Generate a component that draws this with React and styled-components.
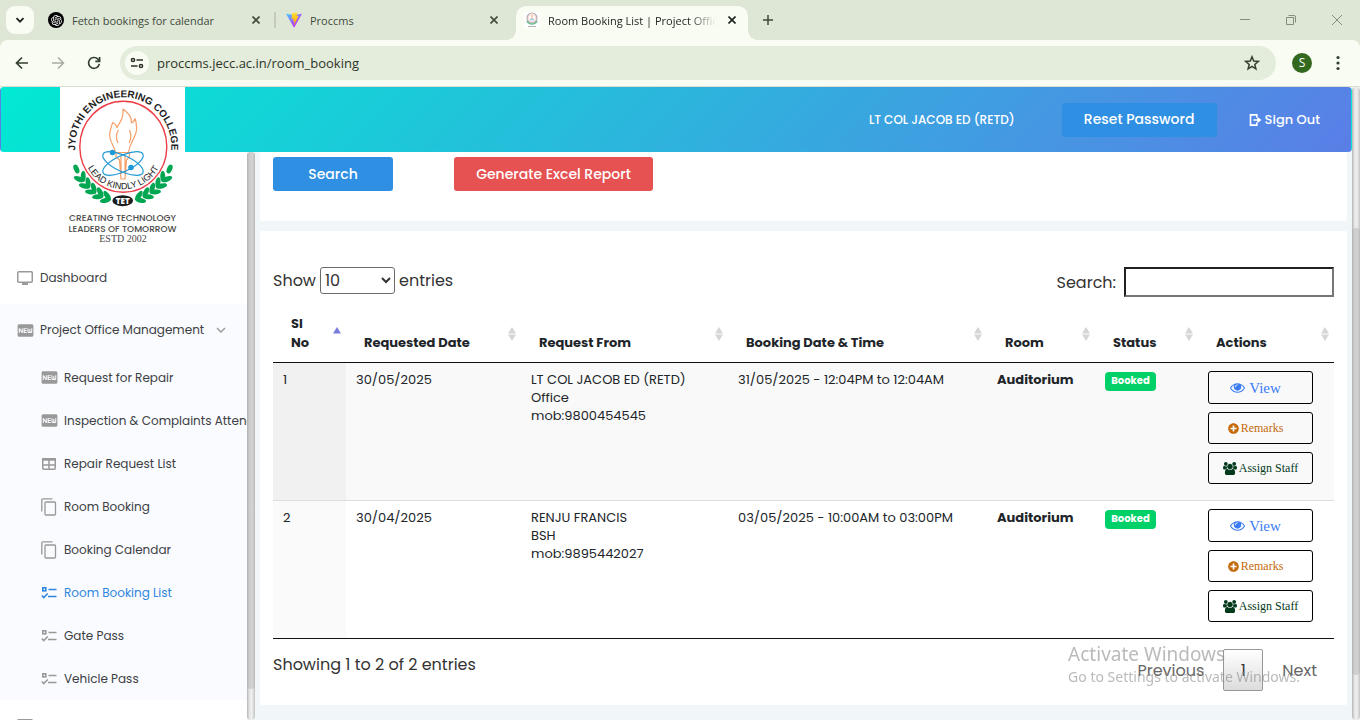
import React from 'react';
import styled, { createGlobalStyle, css } from 'styled-components';
import { MdFiberNew } from 'react-icons/md';
import { FaPlusCircle } from 'react-icons/fa';
import { RiOpenaiFill } from 'react-icons/ri';

const GlobalStyle = createGlobalStyle`
  *, *::before, *::after { box-sizing: border-box; }
  body {
    margin: 0;
    background: #f1f6f9;
    color: #212529;
    font-family: Poppins, Inter, sans-serif;
    font-size: 13px;
  }
  button, input, select { font: inherit; color: inherit; }
  button { cursor: pointer; }
  a { color: inherit; text-decoration: none; }
`;

const uiFont = "'Segoe UI', 'Open Sans', sans-serif";

const Shell = styled.div`
  display: flex;
  flex-direction: column;
  height: 100vh;
  overflow: hidden;
`;

/* ---------- Browser window ---------- */

const Plain = styled.button`
  display: grid;
  place-items: center;
  flex: none;
  padding: 0;
  border: 0;
  background: none;
`;

const TabStrip = styled.div`
  display: flex;
  flex: none;
  height: 40px;
  padding: 6px 0 0 6px;
  background: #dee7d6;
  color: #3f4a3b;
  font-family: ${uiFont};
  font-size: 11px;
`;

const TabSearch = styled(Plain)`
  width: 28px;
  height: 28px;
  margin-right: 6px;
  border-radius: 9px;
  background: #f9fcf3;
  color: #1c231a;
`;

const Tab = styled.div`
  position: relative;
  display: flex;
  align-items: center;
  gap: 8px;
  width: 236px;
  height: 28px;
  margin-right: 2px;
  padding: 0 16px 0 8px;

  ${(p) => p.$divider && css`
    &::after {
      content: '';
      position: absolute;
      right: 0;
      top: 6px;
      width: 2px;
      height: 16px;
      background: #c4cbbd;
    }
  `}

  ${(p) => p.$active && css`
    width: 232px;
    height: 34px;
    margin-right: 10px;
    padding: 0 12px 6px 8px;
    border-radius: 10px 10px 0 0;
    background: #f9fcf3;
    color: #1c231a;
    &::before, &::after {
      content: '';
      position: absolute;
      bottom: 0;
      width: 10px;
      height: 10px;
    }
    &::before {
      left: -10px;
      background: radial-gradient(circle at 0 0, transparent 10px, #f9fcf3 10px);
    }
    &::after {
      right: -10px;
      background: radial-gradient(circle at 100% 0, transparent 10px, #f9fcf3 10px);
    }
  `}
`;

const TabTitle = styled.span`
  flex: 1;
  min-width: 0;
  overflow: hidden;
  white-space: nowrap;
  ${(p) => p.$fade && css`
    mask-image: linear-gradient(to right, #000 82%, transparent 98%);
  `}
`;

const TabIcon = styled.span`
  display: grid;
  place-items: center;
  flex: none;
  width: 16px;
  height: 16px;
  border-radius: ${(p) => (p.$round ? '50%' : '0')};
  background: ${(p) => p.$bg || 'transparent'};
  color: #fff;
`;

const NewTab = styled(Plain)`
  width: 20px;
  height: 28px;
`;

const WindowControls = styled.div`
  display: flex;
  height: 28px;
  margin-left: auto;
  color: #858c80;
`;

const WindowButton = styled(Plain)`
  width: 46px;
`;

const ToolbarBack = styled.div`
  flex: none;
  background: #dee7d6;
`;

const Toolbar = styled.div`
  display: flex;
  align-items: center;
  height: 47px;
  padding: 0 4px 1px;
  border-bottom: 1px solid #d9e0d0;
  border-radius: 8px 8px 0 0;
  background: #f9fcf3;
  color: #33402f;
  font-family: ${uiFont};
`;

const ToolButton = styled(Plain)`
  width: 36px;
  height: 34px;
  color: ${(p) => (p.$dim ? '#a5aca0' : 'inherit')};
`;

const Address = styled.div`
  display: flex;
  align-items: center;
  flex: 1;
  gap: 8px;
  height: 34px;
  margin: 0 8px;
  padding: 0 6px 0 5px;
  border-radius: 17px;
  background: #e4ecdc;
`;

const SiteInfo = styled(Plain)`
  width: 24px;
  height: 24px;
  border-radius: 50%;
  background: #f9fcf3;
`;

const AddressInput = styled.input`
  flex: 1;
  min-width: 0;
  padding: 0;
  border: 0;
  outline: 0;
  background: none;
  color: #2d352a;
`;

const Avatar = styled.button`
  width: 20px;
  height: 20px;
  margin: 0 8px;
  padding: 0;
  border: 0;
  border-radius: 50%;
  background: #33691e;
  color: #fff;
  font-size: 12px;
  line-height: 20px;
`;

/* ---------- Page frame ---------- */

const Viewport = styled.div`
  display: flex;
  flex: 1;
  min-height: 0;
`;

const Page = styled.div`
  display: flex;
  flex-direction: column;
  flex: 1;
  min-width: 0;
`;

const ScrollTrack = styled.div`
  flex: none;
  width: 8px;
  padding-top: ${(p) => p.$before || 0}px;
  padding-bottom: ${(p) => p.$after}px;
  border-radius: 5px;
  background: linear-gradient(to right, #b4b4b4, #e4e4e4 30%, #f0f0f0 60%, #c4c4c4);
`;

const ScrollThumb = styled.div`
  height: 100%;
  border-radius: 4px;
  background: linear-gradient(to right, #b2b2b2, #cdcdcd 30%, #d2d2d2 70%, #b8b8b8);
`;

const Header = styled.header`
  position: relative;
  z-index: 2;
  display: flex;
  align-items: center;
  justify-content: flex-end;
  flex: none;
  height: 65px;
  padding: 0 31px;
  border: 1px solid transparent;
  border-radius: 4px;
  background-image: linear-gradient(135deg, #01e9d3, #5a7ee7);
  color: #fff;
  font-weight: 500;
`;

const LogoBox = styled.a`
  position: absolute;
  left: 59px;
  top: -1px;
  width: 125px;
  height: 158px;
  background: #fff;
`;

const UserName = styled.span`
  margin-right: 47px;
  font-size: 12px;
`;

const FilledButton = styled.button`
  min-width: ${(p) => p.$width}px;
  height: 34px;
  padding: 0 20px;
  border: 0;
  border-radius: 3px;
  background: ${(p) => (p.$danger ? '#e65252' : '#2f8fe2')};
  color: #fff;
  font-size: 14px;
  font-weight: 500;
`;

const SignOut = styled.a`
  display: flex;
  align-items: center;
  gap: 3px;
  margin-left: 32px;
`;

const Body = styled.div`
  display: flex;
  flex: 1;
  min-height: 0;
`;

/* ---------- Sidebar ---------- */

const Sidebar = styled.nav`
  width: 247px;
  flex: none;
  padding-top: 100px;
  overflow: hidden;
  background: #fff;
  color: #3c4043;
  font-size: 12px;
`;

const NavGroup = styled.div`
  background: #fafbfe;
`;

const NavItem = styled.a`
  display: flex;
  align-items: center;
  height: ${(p) => (p.$sub ? 43 : 52)}px;
  padding-left: ${(p) => (p.$sub ? 40 : 16)}px;
  white-space: nowrap;
  color: ${(p) => (p.$current ? '#2f86e0' : 'inherit')};

  svg { flex: none; color: ${(p) => (p.$current ? '#2f86e0' : '#999')}; }
`;

const NavIcon = styled.span`
  display: grid;
  place-items: center;
  flex: none;
  width: 18px;
  height: 20px;
  margin-right: 6px;
`;

const NavLabel = styled.span`
  margin-right: 12px;
`;

/* ---------- Content ---------- */

const Main = styled.main`
  flex: 1;
  min-width: 0;
  padding: 0 5px;
  background: #f1f6f9;
`;

const Card = styled.section`
  margin-bottom: 10px;
  padding: ${(p) => p.$pad};
  border-radius: 2px;
  background: #fff;
`;

const FilterActions = styled.div`
  display: flex;
  gap: 61px;
`;

const Controls = styled.div`
  display: flex;
  justify-content: space-between;
  align-items: flex-start;
  margin-bottom: 7px;
  color: #333;
  font-size: 16px;

  label { display: flex; align-items: center; }
`;

const LengthSelect = styled.select`
  width: 75px;
  height: 27px;
  margin: 0 4px;
  padding: 0;
  border: 1px solid #6b6b6b;
  border-radius: 3px;
  background: #fff;
`;

const SearchInput = styled.input`
  width: 210px;
  height: 30px;
  margin-left: 8px;
  border: 2px inset #767676;
  background: #fff;
`;

const Table = styled.table`
  width: 100%;
  table-layout: fixed;
  border-collapse: separate;
  border-spacing: 0;
  border-bottom: 1px solid #111;
`;

const Th = styled.th`
  padding: 0;
  border-bottom: 1px solid #111;
`;

const SortButton = styled.button`
  display: flex;
  justify-content: space-between;
  align-items: center;
  width: 100%;
  height: 58px;
  padding: 0 5px 10px 18px;
  border: 0;
  background: none;
  font-size: 13px;
  font-weight: 700;
  line-height: 19px;
  text-align: left;
  white-space: nowrap;

  span { align-self: flex-end; }
  svg { flex: none; margin-top: 12px; }
`;

const Row = styled.tr`
  height: ${(p) => (p.$ruled ? 138 : 137)}px;
  background: ${(p) => (p.$odd ? '#f9f9f9' : '#fff')};
  td { border-top: ${(p) => (p.$ruled ? '1px solid #ddd' : '0')}; }
  td:first-child { background: ${(p) => (p.$odd ? '#f1f1f1' : '#fafafa')}; }
`;

const Td = styled.td`
  padding: 8px 10px;
  vertical-align: top;
  line-height: 18px;
  white-space: nowrap;
  font-weight: ${(p) => (p.$strong ? 700 : 400)};
`;

const Badge = styled.span`
  display: block;
  width: 51px;
  height: 19px;
  margin-top: 1px;
  border-radius: 4px;
  background: #00d068;
  color: #fff;
  font-size: 10px;
  font-weight: 700;
  line-height: 18px;
  text-align: center;
`;

const ActionStack = styled.div`
  display: flex;
  flex-direction: column;
  gap: 8px;
`;

const ActionButton = styled.button`
  display: flex;
  align-items: center;
  justify-content: center;
  gap: ${(p) => (p.$large ? 4 : 2)}px;
  width: 105px;
  height: ${(p) => (p.$large ? 33 : 32)}px;
  padding: ${(p) => (p.$shift ? '0 10px 0 0' : '0')};
  border: 1px solid #000;
  border-radius: 3px;
  background: transparent;
  color: ${(p) => p.$color};
  font-family: 'Liberation Serif', serif;
  font-size: ${(p) => (p.$large ? 15 : 12)}px;
`;

const Footer = styled.div`
  display: flex;
  justify-content: space-between;
  align-items: flex-start;
  padding-top: 10px;
  color: #333;
  font-size: 16px;
`;

const Info = styled.div`
  line-height: 32px;
`;

const Pager = styled.div`
  display: flex;
`;

const PageButton = styled.button`
  height: 42px;
  padding: 0 ${(p) => (p.$current ? 0 : 16)}px;
  width: ${(p) => (p.$current ? '40px' : 'auto')};
  margin: 0 ${(p) => (p.$current ? 2 : 0)}px;
  border: 1px solid ${(p) => (p.$current ? '#979797' : 'transparent')};
  border-radius: 2px;
  background: ${(p) => (p.$current ? 'linear-gradient(#fff, #dcdcdc)' : 'none')};
  color: ${(p) => (p.$current ? '#333' : '#666')};
`;

const Watermark = styled.div`
  position: fixed;
  right: 60px;
  bottom: 33px;
  z-index: 5;
  pointer-events: none;
  color: rgba(140, 140, 140, 0.6);
  font-family: 'Noto Sans', sans-serif;
  font-size: 14px;
  line-height: 20px;

  strong { display: block; font-size: 19px; font-weight: 400; line-height: 26px; }
`;

/* ---------- Icons ---------- */

const Stroke = ({ size = 16, w = 1.5, d, box = 16, ...rest }) => (
  <svg width={size} height={size} viewBox={`0 0 ${box} ${box}`} fill="none" stroke="currentColor" strokeWidth={w} aria-hidden="true" {...rest}>
    <path d={d} />
  </svg>
);

const CloseIcon = () => <Stroke size={8} box={8} w={1.6} d="M.5.5l7 7M7.5.5l-7 7" />;

const ViteIcon = () => (
  <svg width="16" height="16" viewBox="0 0 410 404" aria-hidden="true">
    <defs>
      <linearGradient id="viteBody" x1="6" y1="33" x2="235" y2="344" gradientUnits="userSpaceOnUse">
        <stop stopColor="#41D1FF" />
        <stop offset="1" stopColor="#BD34FE" />
      </linearGradient>
      <linearGradient id="viteBolt" x1="194" y1="9" x2="236" y2="293" gradientUnits="userSpaceOnUse">
        <stop stopColor="#FFEA83" />
        <stop offset=".08" stopColor="#FFDD35" />
        <stop offset="1" stopColor="#FFA800" />
      </linearGradient>
    </defs>
    <path fill="url(#viteBody)" d="M399.641 59.5246L215.643 388.545C211.844 395.338 202.084 395.378 198.228 388.618L10.5817 59.5563C6.38087 52.1896 12.6802 43.2665 21.0281 44.7586L205.223 77.6824C206.398 77.8924 207.601 77.8904 208.776 77.6763L389.119 44.8058C397.439 43.2894 403.768 52.1434 399.641 59.5246Z" />
    <path fill="url(#viteBolt)" d="M292.965 1.5744L156.801 28.2552C154.563 28.6937 152.906 30.5903 152.771 32.8664L144.395 174.33C144.198 177.662 147.258 180.248 150.51 179.498L188.42 170.749C191.967 169.931 195.172 173.055 194.443 176.622L183.18 231.775C182.422 235.487 185.907 238.661 189.532 237.56L212.947 230.446C216.577 229.344 220.065 232.527 219.297 236.242L201.398 322.875C200.278 328.294 207.486 331.249 210.492 326.603L212.5 323.5L323.454 102.072C325.312 98.3645 322.108 94.137 318.036 94.9228L279.014 102.454C275.347 103.161 272.227 99.746 273.262 96.1583L298.731 7.86689C299.767 4.27314 296.636 0.855181 292.965 1.5744Z" />
  </svg>
);

const CollegeMark = () => (
  <svg width="16" height="16" viewBox="0 0 16 16" fill="none" aria-hidden="true">
    <circle cx="8" cy="6" r="5" stroke="#b9a9a9" strokeWidth="1.2" />
    <circle cx="8" cy="6" r="3.6" stroke="#eebcbc" strokeWidth=".6" />
    <path d="M8 3v5" stroke="#f3c7a5" strokeWidth="1.6" />
    <path d="M6 7.5h4" stroke="#9fcbea" strokeWidth="1.6" />
    <path d="M3 9c1 2.600 3 3 5 3s4-.4 5-3" stroke="#6fbf94" strokeWidth="1.500" />
    <path d="M4 14.500h8" stroke="#b5b5b5" />
  </svg>
);

const ReloadIcon = () => (
  <svg width="16" height="16" viewBox="0 0 16 16" fill="none" stroke="currentColor" strokeWidth="1.700" aria-hidden="true">
    <path d="M13.300 8.800A5.400 5.400 0 1 1 11.900 4.200L13.500 6" />
    <path d="M13.600 2v4.300H9.300" />
  </svg>
);

const TuneIcon = () => (
  <svg width="14" height="14" viewBox="0 0 14 14" fill="none" stroke="#2b3328" strokeWidth="1.500" aria-hidden="true">
    <circle cx="3" cy="4" r="1.600" />
    <path d="M6.500 4H13M1 10h6.500" />
    <circle cx="11" cy="10" r="1.600" />
  </svg>
);

const MonitorIcon = () => (
  <svg width="16" height="14" viewBox="0 0 16 14" aria-hidden="true">
    <rect x=".75" y=".75" width="14.500" height="10.500" rx="1" fill="none" stroke="currentColor" strokeWidth="1.500" />
    <path d="M5 11h6v3H5z" fill="currentColor" />
  </svg>
);

const GridIcon = () => (
  <svg width="14" height="12" viewBox="0 0 14 12" fill="none" stroke="currentColor" strokeWidth="1.500" aria-hidden="true">
    <rect x=".75" y=".75" width="12.500" height="10.500" rx="1" />
    <path d="M0 1.400h14" strokeWidth="2.600" />
    <path d="M0 7h14M7 2v10" />
  </svg>
);

const CopyIcon = () => (
  <svg width="16" height="18" viewBox="0 0 16 18" fill="none" stroke="currentColor" strokeWidth="1.300" aria-hidden="true">
    <path d="M.8 13.500V1.800q0-1 1-1H11.500" />
    <rect x="4" y="4" width="10.500" height="13" rx="1" />
  </svg>
);

const ChecklistIcon = () => (
  <svg width="16" height="14" viewBox="0 0 16 14" fill="none" stroke="currentColor" strokeWidth="1.600" aria-hidden="true">
    <rect x="1.800" y="1.800" width="3" height="3" />
    <path d="M7.500 3.500h8M7 10.500h8.500M.8 9.500l1.900 2L6.800 7.500" />
  </svg>
);

const SignOutIcon = () => (
  <svg width="13" height="12" viewBox="0 0 13 12" fill="none" stroke="currentColor" strokeWidth="1.600" aria-hidden="true">
    <path d="M7.800 3.500V.9H1.500v10.200h6.300V8.500M4.500 6h6" />
    <path d="M8.300 2.700L12.500 6 8.300 9.300z" fill="currentColor" stroke="none" />
  </svg>
);

const EyeIcon = () => (
  <svg width="15" height="15" viewBox="0 0 1792 1792" fill="currentColor" aria-hidden="true">
    <path d="M1664 960q-152-236-381-353 61 104 61 225 0 185-131.500 316.500t-316.500 131.500-316.500-131.500-131.500-316.500q0-121 61-225-229 117-381 353 133 205 333.500 326.500t434.500 121.500 434.500-121.500 333.500-326.500zm-720-384q0-20-14-34t-34-14q-125 0-214.500 89.500t-89.500 214.500q0 20 14 34t34 14 34-14 14-34q0-86 61-147t147-61q20 0 34-14t14-34zm848 384q0 34-20 69-140 230-376.500 368.500t-499.500 138.500-499.500-139-376.500-368q-20-35-20-69t20-69q140-229 376.500-368t499.500-139 499.500 139 376.500 368q20 35 20 69z" />
  </svg>
);

const UsersIcon = () => (
  <svg width="14" height="13" viewBox="0 0 1920 1792" fill="currentColor" aria-hidden="true">
    <path d="M593 896q-162 5-265 128h-134q-82 0-138-40.500t-56-118.500q0-353 124-353 6 0 43.500 21t97.500 42.500 119 21.500q67 0 133-23-5 37-5 66 0 139 81 256zm1071 637q0 120-73 189.500t-194 69.500h-874q-121 0-194-69.500t-73-189.500q0-53 3.500-103.500t14-109 26.500-108.500 43-97.500 62-81 85.500-53.500 111.500-20q10 0 43 21.500t73 48 107 48 135 21.500 135-21.500 107-48 73-48 43-21.500q61 0 111.500 20t85.500 53.500 62 81 43 97.500 26.500 108.500 14 109 3.500 103.500zm-1024-1277q0 106-75 181t-181 75-181-75-75-181 75-181 181-75 181 75 75 181zm704 384q0 159-112.500 271.500t-271.500 112.500-271.500-112.500-112.500-271.500 112.500-271.500 271.500-112.500 271.500 112.500 112.500 271.500zm576 225q0 78-56 118.500t-138 40.500h-134q-103-123-265-128 81-117 81-256 0-29-5-66 66 23 133 23 59 0 119-21.500t97.500-42.500 43.500-21q124 0 124 353zm-128-609q0 106-75 181t-181 75-181-75-75-181 75-181 181-75 181 75 75 181z" />
  </svg>
);

const SortArrows = ({ active }) => (
  <svg width="8" height="14" viewBox="0 0 8 14" aria-hidden="true">
    <path d="M4 0l4 6.500H0z" fill={active ? '#7b7bdc' : '#d6d6d6'} />
    {!active && <path d="M4 14l4-6.500H0z" fill="#d6d6d6" />}
  </svg>
);

const leafAngles = [24, 33, 42, 51, 60, 69];

const Laurel = ({ side }) => (
  <g fill="#00a651">
    {leafAngles.map((deg, i) => {
      const a = ((side > 0 ? deg : 180 - deg) * Math.PI) / 180;
      const x = 63 + 51 * Math.cos(a);
      const y = 60 + 54 * Math.sin(a);
      return (
        <g key={deg} transform={`translate(${x} ${y}) rotate(${side * deg})`}>
          {i === 0 ? (
            <ellipse rx="2.600" ry="4.600" />
          ) : (
            <>
              <ellipse cx="-3" rx="2.500" ry="5.600" transform="rotate(-34)" />
              <ellipse cx="3" rx="2.500" ry="5.600" transform="rotate(34)" />
            </>
          )}
        </g>
      );
    })}
  </g>
);

const CollegeLogo = () => (
  <svg width="125" height="158" viewBox="0 0 125 158" role="img" aria-label="Jyothi Engineering College">
    <defs>
      <path id="ringTop" d="M16.500 71A48 49.500 0 1 1 110 71" />
      <path id="ringLow" d="M23.500 69A40.500 41 0 0 0 103 69" />
    </defs>
    <g fill="#1d1d1d" fontFamily="'Liberation Sans', sans-serif" textAnchor="middle">
      <text fontSize="10" fontWeight="700">
        <textPath href="#ringTop" startOffset="50%">JYOTHI ENGINEERING COLLEGE</textPath>
      </text>
      <text fontSize="9">
        <textPath href="#ringLow" startOffset="50%">LEAD KINDLY LIGHT</textPath>
      </text>
    </g>
    <ellipse cx="63.300" cy="59.700" rx="43.500" ry="45.500" fill="none" stroke="#ee3b45" strokeWidth="1.400" />
    <Laurel side={-1} />
    <Laurel side={1} />
    <g fill="none" stroke="#f5a06a" strokeWidth="1.200" strokeLinejoin="round">
      <path d="M55.500 65.500C54 58 48 53 50 45c.8-4 2-6.500 2.500-9.500 2.500 1 4 3 4.500 5 3-6 6.500-8 6-18.500 5.500 4 9 8 8.500 14 2-.8 3-2.500 3.500-4.500 2 6 2.200 12 0 17-2 5-5.500 9-6.500 17z" />
      <path d="M58 56c-2.500-5-1.500-10 .5-13M69 56c3-5 2-9 .5-13" />
      <path d="M56 65.500h13.500v4l-3 3.500-1.500 19h-4l-1.500-19-3.500-3.500zM61 69v18M65 69v18" />
    </g>
    <g fill="none" stroke="#1f9ad6" strokeWidth="1.200">
      <ellipse cx="63" cy="76.500" rx="22" ry="8" transform="rotate(25 63 76.500)" />
      <ellipse cx="63" cy="76.500" rx="22" ry="8" transform="rotate(-25 63 76.500)" />
      <circle cx="52.500" cy="65.500" r="2.200" fill="#1f9ad6" />
      <circle cx="71" cy="80.500" r="2.200" fill="#1f9ad6" />
    </g>
    <ellipse cx="62.700" cy="113.700" rx="10.300" ry="5.500" fill="#1d1d1d" />
    <g textAnchor="middle" fontFamily="Poppins, Lato, sans-serif" fontSize="9" fill="#4a4a4a">
      <text x="62.700" y="116.500" fontFamily="'Open Sans', sans-serif" fontSize="8" fontWeight="800" fill="#fff">TET</text>
      <text x="62.500" y="134">CREATING TECHNOLOGY</text>
      <text x="62.500" y="144.500">LEADERS OF TOMORROW</text>
      <text x="63" y="155" fontFamily="'Liberation Serif', serif" fontSize="10">ESTD 2002</text>
    </g>
  </svg>
);

/* ---------- Data ---------- */

const NewIcon = () => <MdFiberNew size={19} aria-hidden="true" />;

const subItems = [
  { label: 'Request for Repair', Icon: NewIcon },
  { label: 'Inspection & Complaints Attended', Icon: NewIcon },
  { label: 'Repair Request List', Icon: GridIcon },
  { label: 'Room Booking', Icon: CopyIcon },
  { label: 'Booking Calendar', Icon: CopyIcon },
  { label: 'Room Booking List', Icon: ChecklistIcon, current: true },
  { label: 'Gate Pass', Icon: ChecklistIcon },
  { label: 'Vehicle Pass', Icon: ChecklistIcon },
];

const columns = [
  { label: <>Sl<br />No</>, key: 'no', width: 73 },
  { label: 'Requested Date', key: 'date', width: 175 },
  { label: 'Request From', key: 'from', width: 207 },
  { label: 'Booking Date & Time', key: 'time' },
  { label: 'Room', key: 'room', width: 108 },
  { label: 'Status', key: 'status', width: 103 },
  { label: 'Actions', key: 'actions', width: 136 },
];

const Col = styled.col`
  width: ${(p) => (p.$width ? `${p.$width}px` : 'auto')};
`;

const bookings = [
  { no: 1, date: '30/05/2025', from: ['LT COL JACOB ED (RETD)', 'Office', 'mob:9800454545'], time: '31/05/2025 - 12:04PM to 12:04AM' },
  { no: 2, date: '30/04/2025', from: ['RENJU FRANCIS', 'BSH', 'mob:9895442027'], time: '03/05/2025 - 10:00AM to 03:00PM' },
];

/* ---------- Sections ---------- */

const BrowserBar = () => (
  <>
    <TabStrip>
      <TabSearch aria-label="Search tabs"><Stroke size={10} box={10} w={1.8} d="M1.500 3.200L5 6.700l3.500-3.500" /></TabSearch>
      <Tab $divider>
        <TabIcon $round $bg="#000"><RiOpenaiFill size={13} aria-hidden="true" /></TabIcon>
        <TabTitle>Fetch bookings for calendar</TabTitle>
        <Plain aria-label="Close tab"><CloseIcon /></Plain>
      </Tab>
      <Tab>
        <TabIcon><ViteIcon /></TabIcon>
        <TabTitle>Proccms</TabTitle>
        <Plain aria-label="Close tab"><CloseIcon /></Plain>
      </Tab>
      <Tab $active>
        <TabIcon $bg="#fff"><CollegeMark /></TabIcon>
        <TabTitle $fade>Room Booking List | Project Office</TabTitle>
        <Plain aria-label="Close tab"><CloseIcon /></Plain>
      </Tab>
      <NewTab aria-label="New tab"><Stroke size={12} box={12} d="M6 1v10M1 6h10" /></NewTab>
      <WindowControls>
        <WindowButton aria-label="Minimize"><Stroke size={10} box={10} w={1} d="M0 4.500h10" /></WindowButton>
        <WindowButton aria-label="Restore"><Stroke size={10} box={10} w={1} d="M.5 2.500h7v7h-7zM2.500.5H8q1.500 0 1.500 1.500v5.500" /></WindowButton>
        <WindowButton aria-label="Close window"><Stroke size={10} box={10} w={1} d="M0 0l10 10M10 0L0 10" /></WindowButton>
      </WindowControls>
    </TabStrip>
    <ToolbarBack>
      <Toolbar>
        <ToolButton aria-label="Back"><Stroke d="M14 8H3M8 2.500L2.500 8 8 13.500" w={1.7} /></ToolButton>
        <ToolButton $dim aria-label="Forward"><Stroke d="M2 8h11M8 2.500L13.500 8 8 13.500" w={1.5} /></ToolButton>
        <ToolButton aria-label="Reload"><ReloadIcon /></ToolButton>
        <Address>
          <SiteInfo aria-label="Site information"><TuneIcon /></SiteInfo>
          <AddressInput aria-label="Address" defaultValue="proccms.jecc.ac.in/room_booking" />
          <ToolButton aria-label="Bookmark this page">
            <Stroke w={1.5} d="M8 1.800l1.700 4.300 4.600.3-3.500 3 1.100 4.500L8 11.400l-3.900 2.500 1.100-4.500-3.500-3 4.600-.3z" />
          </ToolButton>
        </Address>
        <Avatar aria-label="Profile">S</Avatar>
        <ToolButton aria-label="Menu">
          <svg width="4" height="16" viewBox="0 0 4 16" fill="currentColor" aria-hidden="true">
            <circle cx="2" cy="2.500" r="1.600" /><circle cx="2" cy="8" r="1.600" /><circle cx="2" cy="13.500" r="1.600" />
          </svg>
        </ToolButton>
      </Toolbar>
    </ToolbarBack>
  </>
);

const SideNav = () => (
  <Sidebar aria-label="Main">
    <NavItem href="#dashboard"><NavIcon><MonitorIcon /></NavIcon><NavLabel>Dashboard</NavLabel></NavItem>
    <NavGroup>
      <NavItem href="#project-office">
        <NavIcon><NewIcon /></NavIcon>
        <NavLabel>Project Office Management</NavLabel>
        <Stroke size={10} box={10} w={1.4} d="M1 3l4 4 4-4" />
      </NavItem>
      {subItems.map(({ label, Icon, current }) => (
        <NavItem key={label} href={`#${label}`} $sub $current={current} aria-current={current ? 'page' : undefined}>
          <NavIcon><Icon /></NavIcon>
          {label}
        </NavItem>
      ))}
    </NavGroup>
    <NavItem href="#more" aria-label="More"><NavIcon><MonitorIcon /></NavIcon></NavItem>
  </Sidebar>
);

const BookingTable = () => (
  <Table>
    <colgroup>{columns.map((c) => <Col key={c.key} $width={c.width} />)}</colgroup>
    <thead>
      <tr>
        {columns.map((c) => (
          <Th key={c.key} scope="col">
            <SortButton><span>{c.label}</span><SortArrows active={c.key === 'no'} /></SortButton>
          </Th>
        ))}
      </tr>
    </thead>
    <tbody>
      {bookings.map((b, i) => (
        <Row key={b.no} $odd={i % 2 === 0} $ruled={i > 0}>
          <Td>{b.no}</Td>
          <Td>{b.date}</Td>
          <Td>{b.from.map((line) => <div key={line}>{line}</div>)}</Td>
          <Td>{b.time}</Td>
          <Td $strong>Auditorium</Td>
          <Td><Badge>Booked</Badge></Td>
          <Td>
            <ActionStack>
              <ActionButton $large $shift $color="#3b7cf6"><EyeIcon />View</ActionButton>
              <ActionButton $shift $color="#c46a0a"><FaPlusCircle size={11} aria-hidden="true" />Remarks</ActionButton>
              <ActionButton $color="#043a1c"><UsersIcon />Assign Staff</ActionButton>
            </ActionStack>
          </Td>
        </Row>
      ))}
    </tbody>
  </Table>
);

export default function App() {
  return (
    <Shell>
      <GlobalStyle />
      <BrowserBar />
      <Viewport>
        <Page>
          <Header>
            <LogoBox href="#home"><CollegeLogo /></LogoBox>
            <UserName>LT COL JACOB ED (RETD)</UserName>
            <FilledButton $width={155}>Reset Password</FilledButton>
            <SignOut href="#sign-out"><SignOutIcon />Sign Out</SignOut>
          </Header>
          <Body>
            <SideNav />
            <ScrollTrack $after={31}><ScrollThumb /></ScrollTrack>
            <Main>
              <Card $pad="5px 13px 30px">
                <FilterActions>
                  <FilledButton $width={120}>Search</FilledButton>
                  <FilledButton $danger $width={199}>Generate Excel Report</FilledButton>
                </FilterActions>
              </Card>
              <Card $pad="36px 13px 14px">
                <Controls>
                  <label>
                    Show
                    <LengthSelect defaultValue="10">
                      <option>10</option>
                      <option>25</option>
                      <option>50</option>
                      <option>100</option>
                    </LengthSelect>
                    entries
                  </label>
                  <label>Search:<SearchInput type="search" /></label>
                </Controls>
                <BookingTable />
                <Footer>
                  <Info>Showing 1 to 2 of 2 entries</Info>
                  <Pager>
                    <PageButton>Previous</PageButton>
                    <PageButton $current aria-current="page">1</PageButton>
                    <PageButton>Next</PageButton>
                  </Pager>
                </Footer>
              </Card>
            </Main>
          </Body>
        </Page>
        <ScrollTrack $before={141} $after={45}><ScrollThumb /></ScrollTrack>
      </Viewport>
      <Watermark>
        <strong>Activate Windows</strong>
        Go to Settings to activate Windows.
      </Watermark>
    </Shell>
  );
}
